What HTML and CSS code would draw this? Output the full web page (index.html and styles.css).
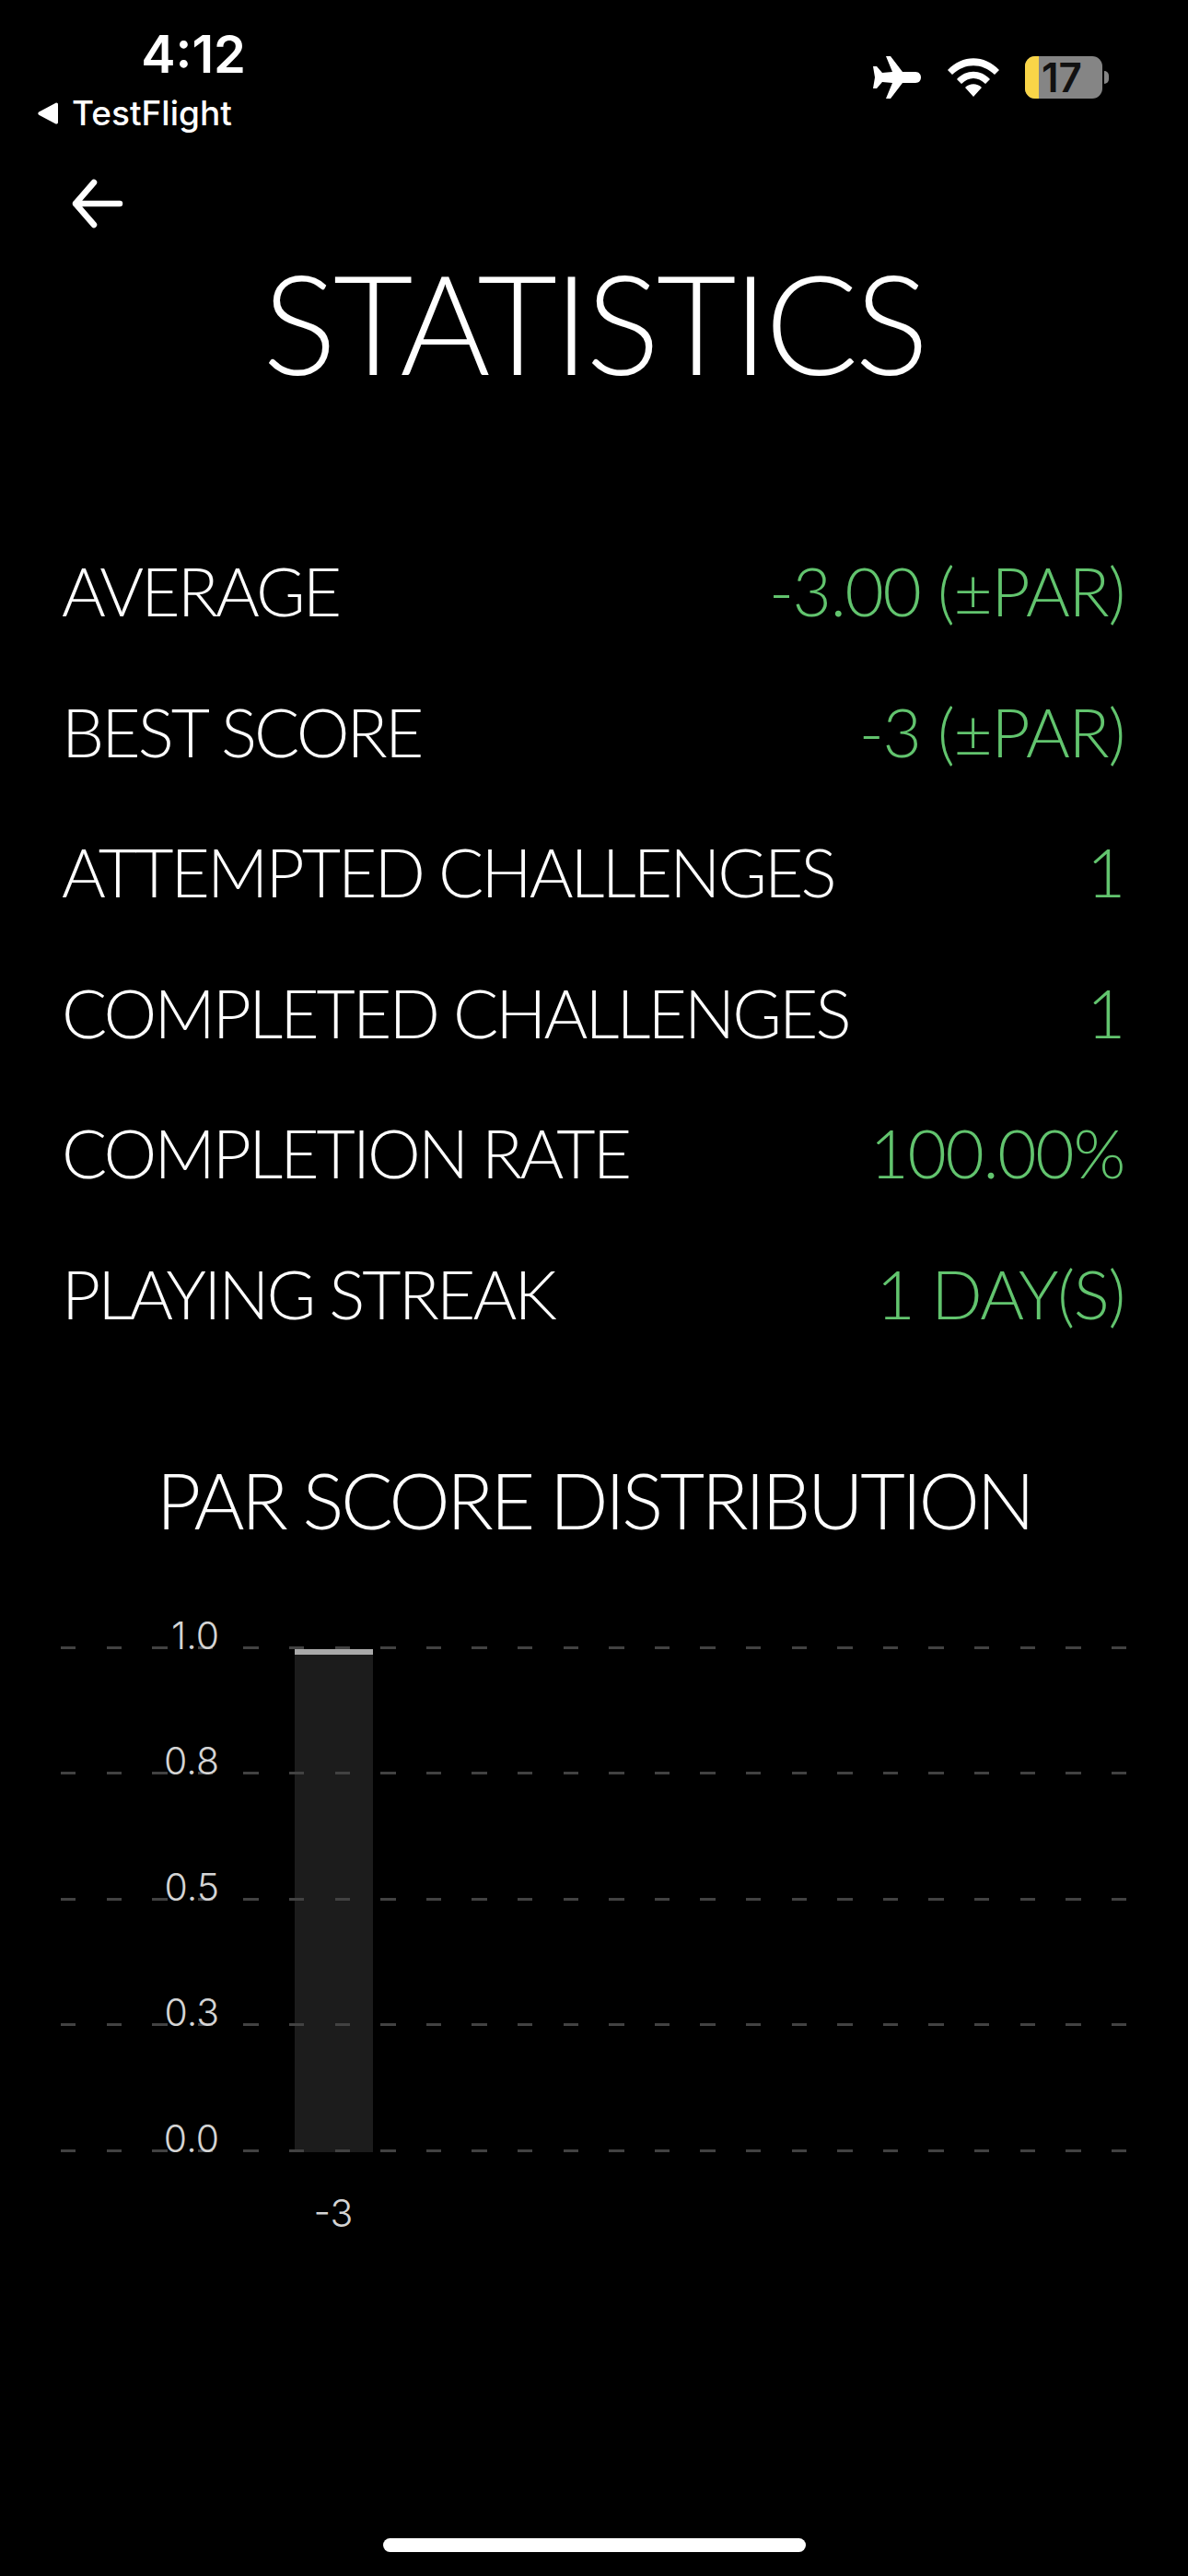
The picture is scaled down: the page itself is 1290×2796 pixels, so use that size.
FILE: index.html
```html
<!DOCTYPE html>
<html lang="en">
 <head>
    <meta charset="utf-8">
    <title>Statistics</title>
    <link rel="stylesheet" href="styles.css">
 </head>
 <body>
    <div class="status">
        <div class="status-left">
            <div class="time">4:12</div>
            <div class="back-app">
                <svg class="back-tri" width="22" height="26" viewBox="0 0 18 24" preserveAspectRatio="none"><path d="M16 1.5 C17 1 18 1.8 18 3 L18 21 C18 22.2 17 23 16 22.5 L1 13.5 C0 12.8 0 11.2 1 10.5 Z" fill="#fff"/></svg>
                <span>TestFlight</span>
            </div>
        </div>
        <div class="status-right">
            <svg width="52" height="46" viewBox="0 0 52 46"><path d="M14 0 L19 0 L32 17 L46 17 C50 17 52 20 52 23 C52 26 50 29 46 29 L32 29 L19 46 L14 46 L21 29 L10 28 L4 35 L0 35 L2 23 L0 11 L4 11 L10 18 L21 17 Z" fill="#fff"/></svg>
            <svg class="wifi" width="56" height="42" viewBox="0 0 56 42"><path d="M0 13 C16 -4 40 -4 56 13 L51 18 C37 5 19 5 5 18 Z M10 23 C20 12 36 12 46 23 L41 28 C33 20 23 20 15 28 Z M19 32 C24 27 32 27 37 32 L28 42 Z" fill="#fff"/></svg>
            <div class="battery">
                <div class="battery-body">
                    <div class="battery-fill"></div>
                    <div class="battery-num">17</div>
                </div>
                <div class="battery-tip"></div>
            </div>
        </div>
    </div>

    <svg class="arrow" width="60" height="56" viewBox="0 0 60 56"><path d="M8 28 H56 M28 5 L8 28 L28 51" fill="none" stroke="#fff" stroke-width="6.5" stroke-linecap="round" stroke-linejoin="round"/></svg>

    <h1 class="title">STATISTICS</h1>

    <div class="stats">
        <div class="row"><span>AVERAGE</span><span class="val">-3.00 (±PAR)</span></div>
        <div class="row"><span>BEST SCORE</span><span class="val">-3 (±PAR)</span></div>
        <div class="row"><span>ATTEMPTED CHALLENGES</span><span class="val">1</span></div>
        <div class="row"><span>COMPLETED CHALLENGES</span><span class="val">1</span></div>
        <div class="row"><span>COMPLETION RATE</span><span class="val">100.00%</span></div>
        <div class="row"><span>PLAYING STREAK</span><span class="val">1 DAY(S)</span></div>
    </div>

    <h2 class="sub">PAR SCORE DISTRIBUTION</h2>

    <div class="chart">
        <div class="bar"></div>
        <div class="tick first"><span>1.0</span></div>
        <div class="tick"><span>0.8</span></div>
        <div class="tick"><span>0.5</span></div>
        <div class="tick"><span>0.3</span></div>
        <div class="tick"><span>0.0</span></div>
    </div>
    <div class="x-label">-3</div>

    <div class="home"></div>
 </body>
</html>
```

FILE: styles.css
```css
html, body {
    margin: 0;
    padding: 0;
    height: 2796px;
}

body {
    background-color: #000;
    color: #fff;
    font-family: "Lato", sans-serif;
    font-weight: 300;
    display: flex;
    flex-direction: column;
}

/* status bar */

.status {
    display: flex;
    justify-content: space-between;
    height: 148px;
    font-family: "Inter", sans-serif;
}

.status-left {
    width: 270px;
    padding-top: 28px;
    box-sizing: border-box;
}

.time {
    font-size: 56px;
    font-weight: 600;
    line-height: 62px;
    text-align: right;
    padding-right: 3px;
}

.back-app {
    display: flex;
    align-items: center;
    gap: 15px;
    margin-top: 12px;
    padding-left: 41px;
    font-size: 37px;
    font-weight: 500;
    line-height: 42px;
    white-space: nowrap;
}

.status-right {
    display: flex;
    align-items: center;
    height: 80px;
    margin-top: 44px;
    padding-right: 86px;
}

.wifi {
    margin-left: 29px;
}

.battery {
    display: flex;
    align-items: center;
    margin-left: 28px;
}

.battery-body {
    width: 84px;
    height: 46px;
    border-radius: 11px;
    background: #858585;
    display: flex;
    overflow: hidden;
}

.battery-fill {
    width: 15px;
    background: #f9d548;
}

.battery-num {
    font-size: 44px;
    font-weight: 600;
    line-height: 46px;
    color: #111;
    margin-left: 3px;
}

.battery-tip {
    width: 5px;
    height: 14px;
    margin-left: 2px;
    background: #858585;
    border-radius: 0 7px 7px 0;
}

/* header */

.arrow {
    display: block;
    margin: 45px 0 0 74px;
}

.title {
    margin: 10px 0 0;
    font-size: 150px;
    font-weight: 300;
    letter-spacing: -3.9px;
    line-height: 180px;
    text-align: center;
}

/* stats */

.stats {
    margin-top: 126px;
    padding: 0 69px 0 67px;
}

.row {
    display: flex;
    justify-content: space-between;
    height: 152.6px;
    line-height: 152.6px;
    font-size: 73px;
    letter-spacing: -2.9px;
}

.val {
    color: #62c46e;
    letter-spacing: -1.3px;
}

.sub {
    margin: 0;
    margin-top: 97px;
    font-size: 84px;
    font-weight: 300;
    letter-spacing: -3.6px;
    line-height: 100px;
    text-align: center;
}

/* chart */

.chart {
    position: relative;
    margin: 52px 66px 0;
    width: 1159px;
    font-family: "Inter", sans-serif;
    font-size: 41px;
    font-weight: 300;
    color: #d4d4d4;
}

.bar {
    position: absolute;
    left: 254px;
    bottom: 0;
    width: 85px;
    height: 546px;
    box-sizing: border-box;
    background: #1c1c1c;
    border-top: 6px solid #aaa;
}

.tick {
    position: relative;
    height: 136.5px;
    box-sizing: border-box;
    display: flex;
    align-items: flex-end;
    background-image: repeating-linear-gradient(to right, #424242 0, #424242 16.5px, transparent 16.5px, transparent 49.6px);
    background-size: 100% 3px;
    background-repeat: no-repeat;
    background-position: bottom;
}

.tick.first {
    height: 60px;
}

.tick span {
    width: 172px;
    text-align: right;
    line-height: 46px;
    margin-bottom: -8px;
}

.x-label {
    margin: 41px 0 0 339px;
    width: 46px;
    text-align: center;
    font-family: "Inter", sans-serif;
    font-size: 41px;
    color: #d4d4d4;
}

.home {
    width: 459px;
    height: 15px;
    margin: auto auto 26px;
    border-radius: 8px;
    background: #fff;
}
```
